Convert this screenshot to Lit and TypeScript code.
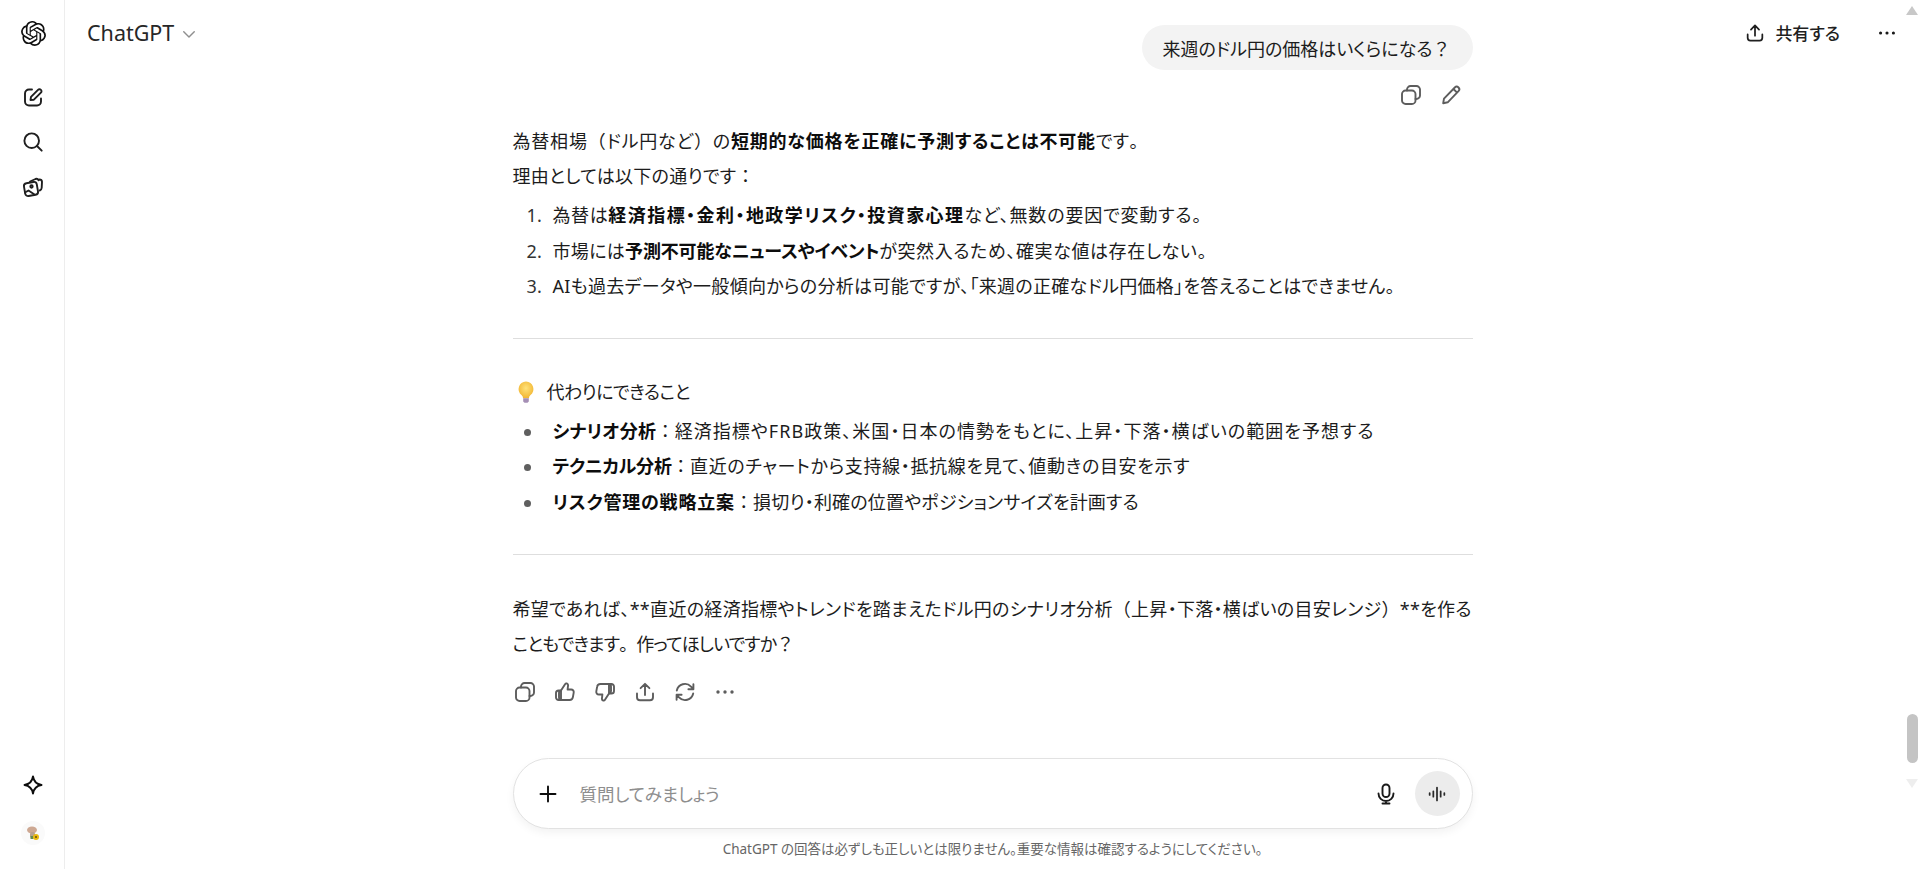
import { LitElement, html, css, svg } from "lit";
import { customElement } from "lit/decorators.js";

const ic = (body: unknown, size = 24, cls = "") => html`<svg class=${cls} width=${size} height=${size} viewBox="0 0 24 24" fill="none" stroke="currentColor" stroke-width="1.9" stroke-linecap="round" stroke-linejoin="round">${body}</svg>`;

/* Full-width punctuation keeps its full em box; everything else is set proportionally. */
const t = (s: string) => s.split(/([（）：？。])/).map((p) => (/^[（）：？。]$/.test(p) ? html`<span class="fw">${p}</span>` : p));

const copy = svg`<rect x="3" y="7.5" width="13.5" height="13.5" rx="3.6"/><path d="M8 7.5V6.6A3.6 3.6 0 0 1 11.6 3h5.8A3.6 3.6 0 0 1 21 6.6v5.8a3.6 3.6 0 0 1-3.6 3.6h-.9"/>`;
const share = svg`<path d="M12 15V4M7.6 8.2 12 3.8l4.4 4.4M4 13.5v3.7A3 3 0 0 0 7 20.2h10a3 3 0 0 0 3-3v-3.7"/>`;
const pencil = svg`<path d="M4.2 20.2 5 15.6 15.8 4.5a2.6 2.6 0 0 1 3.7 3.7L8.7 19.3zM14.4 6l3.7 3.7"/>`;
const thumbUp = svg`<path d="M8 10.5 12.2 4c.6-1 2.7-.8 2.9 1.2l-.5 4.3h3.6a2.6 2.6 0 0 1 2.5 3.1l-.8 4.5a3.4 3.4 0 0 1-3.4 2.9H8z"/><path d="M8 10.5H5.6A2.6 2.6 0 0 0 3 13.100v4.300A2.6 2.6 0 0 0 5.600 20H8a2.600 2.600 0 0 1-2-2.600v-4.300a2.600 2.600 0 0 1 2-2.600z"/>`;
const thumbDown = svg`<path d="M16 13.500 11.800 20c-.6 1-2.700.8-2.900-1.200l.5-4.300H5.800a2.600 2.600 0 0 1-2.500-3.100l.8-4.500A3.400 3.400 0 0 1 7.500 4H16z"/><path d="M16 13.500h2.400a2.600 2.600 0 0 0 2.600-2.600V6.600A2.600 2.600 0 0 0 18.400 4H16a2.600 2.600 0 0 1 2 2.600v4.300a2.600 2.600 0 0 1-2 2.600z"/>`;
const regen = svg`<path d="M3.800 10.500A8.300 8.300 0 0 1 18 6.600l2.400 2.600M20.400 4.200v5h-5M20.200 13.500A8.300 8.300 0 0 1 6 17.400l-2.400-2.600M3.600 19.800v-5h5"/>`;
const dots = svg`<circle cx="5" cy="12" r="1.700" fill="currentColor" stroke="none"/><circle cx="12" cy="12" r="1.700" fill="currentColor" stroke="none"/><circle cx="19" cy="12" r="1.700" fill="currentColor" stroke="none"/>`;
const logo = "M22.2819 9.8211a5.9847 5.9847 0 0 0-.5157-4.9108 6.0462 6.0462 0 0 0-6.5098-2.9A6.0651 6.0651 0 0 0 4.9807 4.1818a5.9847 5.9847 0 0 0-3.9977 2.9 6.0462 6.0462 0 0 0 .7427 7.0966 5.98 5.98 0 0 0 .511 4.9107 6.051 6.051 0 0 0 6.5146 2.9001A5.9847 5.9847 0 0 0 13.2599 24a6.0557 6.0557 0 0 0 5.7718-4.2058 5.9894 5.9894 0 0 0 3.9977-2.9001 6.0557 6.0557 0 0 0-.7475-7.0729zm-9.022 12.6081a4.4755 4.4755 0 0 1-2.8764-1.0408l.1419-.0804 4.7783-2.7582a.7948.7948 0 0 0 .3927-.6813v-6.7369l2.02 1.1686a.071.071 0 0 1 .038.052v5.5826a4.504 4.504 0 0 1-4.4945 4.4944zm-9.6607-4.1254a4.4708 4.4708 0 0 1-.5346-3.0137l.142.0852 4.783 2.7582a.7712.7712 0 0 0 .7806 0l5.8428-3.3685v2.3324a.0804.0804 0 0 1-.0332.0615L9.74 19.9502a4.4992 4.4992 0 0 1-6.1408-1.6464zM2.3408 7.8956a4.485 4.485 0 0 1 2.3655-1.9728V11.6a.7664.7664 0 0 0 .3879.6765l5.8144 3.3543-2.0201 1.1685a.0757.0757 0 0 1-.071 0l-4.8303-2.7865A4.504 4.504 0 0 1 2.3408 7.872zm16.5963 3.8558L13.1038 8.364 15.1192 7.2a.0757.0757 0 0 1 .071 0l4.8303 2.7913a4.4944 4.4944 0 0 1-.6765 8.1042v-5.6772a.79.79 0 0 0-.407-.667zm2.0107-3.0231l-.142-.0852-4.7735-2.7818a.7759.7759 0 0 0-.7854 0L9.409 9.2297V6.8974a.0662.0662 0 0 1 .0284-.0615l4.8303-2.7866a4.4992 4.4992 0 0 1 6.6802 4.66zM8.3065 12.863l-2.02-1.1638a.0804.0804 0 0 1-.038-.0567V6.0742a4.4992 4.4992 0 0 1 7.3757-3.4537l-.142.0805L8.704 5.459a.7948.7948 0 0 0-.3927.6813zm1.0976-2.3654l2.602-1.4998 2.6069 1.4998v2.9994l-2.5974 1.4997-2.6067-1.4997Z";

@customElement("app-root")
export class AppRoot extends LitElement {
  static styles = css`
    :host { display: flex; height: 869px; overflow: hidden; background: #fff; color: #0d0d0d; position: relative;
      font-family: "Noto Sans", "Noto Sans CJK JP", sans-serif; font-size: 18px; font-feature-settings: "palt"; }
    svg { display: block; flex: none; }
    .fw { font-feature-settings: normal; }
    .ls-n09 { letter-spacing: -0.900px; }
    .ls-n02 { letter-spacing: -0.200px; }
    .ls-n015 { letter-spacing: -0.150px; }
    .ls-02 { letter-spacing: 0.200px; }
    .ls-06 { letter-spacing: 0.600px; }
    .ls-065 { letter-spacing: 0.650px; }
    .ls-08 { letter-spacing: 0.800px; }
    .ls-085 { letter-spacing: 0.850px; }
    .ls-10 { letter-spacing: 1.050px; }
    .ls-14 { letter-spacing: 1.450px; }
    .rail { width: 62px; flex: none; border-right: 1px solid #ededed; display: flex; flex-direction: column; align-items: center; padding: 21px 0 24px 2px; height: 824px; }
    .rail .logo { margin-bottom: 39px; }
    .rail .nav { display: flex; flex-direction: column; gap: 21px; color: #1f1f1f; margin-bottom: auto; }
    .rail .avatar { margin: 24px 0 0; }
    .main { flex: 1; min-width: 0; display: flex; flex-direction: column; position: relative; }
    .head { position: absolute; top: 0; left: 0; right: 0; display: flex; align-items: center; height: 65px; padding: 0 22px 0 22px; }
    .title { font-size: 21.500px; color: #272727; }
    .chev { color: #8f8f8f; margin: 2px 0 0 6px; }
    .spacer { flex: 1; }
    .share { display: flex; align-items: center; gap: 9px; font-size: 17px; font-weight: 500; color: #1f1f1f; }
    .more { margin-left: 36px; color: #1a1a1a; }
    .col { width: 960px; margin: 0 auto; display: flex; flex-direction: column; flex: 1; }
    .bubble-row { display: flex; justify-content: flex-end; padding-top: 25px; }
    .bubble { height: 45px; box-sizing: border-box; background: #f3f3f3; border-radius: 23px; padding: 0 21px; display: flex; align-items: center; width: 331px; white-space: nowrap; color: #1c1c1c; }
    .user-actions { display: flex; justify-content: flex-end; gap: 16px; padding: 13px 10px 0 0; color: #5d5d5d; height: 24px; }
    .msg { margin-top: 17px; line-height: 35px; color: #1c1c1c; letter-spacing: 0.300px; }
    p { margin: 0; }
    b { font-weight: 700; color: #0d0d0d; }
    ol, ul { margin: 4px 0 0; padding: 0; list-style: none; }
    li { display: flex; height: 35.500px; align-items: center; padding-left: 40px; position: relative; white-space: nowrap; }
    .n { position: absolute; left: 14px; color: #333; }
    .dot { position: absolute; left: 11px; top: 15px; width: 7px; height: 7px; border-radius: 50%; background: #5f5f5f; }
    hr { border: 0; border-top: 1px solid #dedede; margin: 34px 0 37px; }
    hr.first { margin: 33px 0 36px; }
    .bulbline { display: flex; align-items: center; gap: 11px; padding-left: 3px; height: 35px; letter-spacing: -0.500px; }
    .actions { display: flex; gap: 16px; margin-top: 18px; color: #5d5d5d; }
    .composer { height: 71px; box-sizing: border-box; margin-top: auto; border: 1px solid #e2e2e2; border-radius: 36px; box-shadow: 0 4px 8px rgba(0,0,0,.05); display: flex; align-items: center; padding: 0 12px 0 22px; background: #fff; }
    .ph { color: #8e8e8e; margin-left: 20px; flex: 1; font-size: 17.500px; }
    .mic { color: #1a1a1a; margin-right: 17px; }
    .voice { width: 45px; height: 45px; border-radius: 50%; background: #ececec; display: flex; align-items: center; justify-content: center; color: #2a2a2a; }
    .note { text-align: center; font-size: 13.500px; color: #666; height: 40px; line-height: 41px; }
    .sb { position: absolute; right: 0; top: 0; bottom: 0; width: 17px; }
    .thumb { position: absolute; right: 2px; top: 714px; width: 11px; height: 49px; border-radius: 6px; background: #c4c4c4; }
    .up, .down { position: absolute; right: 2px; width: 0; height: 0; border-left: 6px solid transparent; border-right: 6px solid transparent; }
    .up { top: 6px; border-bottom: 9px solid #c8c8c8; }
    .down { top: 779px; border-top: 9px solid #eeeeee; }
  `;

  render() {
    return html`
      <aside class="rail">
        <svg class="logo" width="25" height="25" viewBox="0 0 24 24" fill="#111"><path d=${logo}/></svg>
        <div class="nav">
          ${ic(svg`<path d="M11 4.500H8A4 4 0 0 0 4 8.500v8A4 4 0 0 0 8 20.500h8a4 4 0 0 0 4-4v-3"/><path d="M9.500 15l.5-3.200L17 4.800a2 2 0 0 1 2.900 2.900l-7 7z"/>`, 24)}
          ${ic(svg`<circle cx="10.700" cy="10.700" r="7.300"/><path d="m16 16 4.700 4.700"/>`, 24)}
          ${ic(svg`<path d="M9 6.500 14.500 4a2.500 2.500 0 0 1 3.100 1.200M18.500 4.500A2.500 2.500 0 0 1 21 6.800l-.3 6a3 3 0 0 1-2 2.700"/><rect x="3.500" y="7.500" width="13" height="13" rx="3" transform="rotate(-10 10 14)"/><circle cx="10.500" cy="11.500" r="1.200"/><path d="m4 17.500 3.500-2 6 4"/>`, 24)}
        </div>
        ${ic(svg`<path d="M12 3.500c.8 5 3.200 7.700 8.500 8.500-5.300.8-7.700 3.500-8.500 8.500-.8-5-3.200-7.700-8.500-8.500 5.300-.8 7.700-3.500 8.500-8.500z"/>`, 24)}
        <svg class="avatar" width="24" height="24" viewBox="0 0 24 24">
          <circle cx="12" cy="12" r="12" fill="#fafafa"/>
          <ellipse cx="11" cy="9" rx="5" ry="3.500" fill="#cda893"/>
          <rect x="9" y="11" width="5" height="6" rx="2" fill="#b7a08f"/>
          <rect x="9.500" y="15" width="3" height="3" fill="#5f8a55"/>
          <circle cx="15" cy="16" r="3" fill="#e8b90f"/>
          <circle cx="15" cy="16" r="1" fill="#6b4a12"/>
        </svg>
      </aside>
      <main class="main">
        <header class="head">
          <span class="title">ChatGPT</span>
          ${ic(svg`<path d="m5 9 7 7 7-7"/>`, 18, "chev")}
          <span class="spacer"></span>
          <span class="share">${ic(share, 22)}共有する</span>
          <span class="more">${ic(dots, 22)}</span>
        </header>
        <section class="col">
          <div class="bubble-row"><div class="bubble">${t("来週のドル円の価格はいくらになる？")}</div></div>
          <div class="user-actions">${ic(copy, 24)}${ic(pencil, 24)}</div>
          <article class="msg">
            <p><span class="ls-08">${t("為替相場（ドル円など）の")}</span><b class="ls-08">短期的な価格を正確に予測することは不可能</b>${t("です。")}</p>
            <p>${t("理由としては以下の通りです：")}</p>
            <ol>
              <li><span class="n">1.</span><span><span class="ls-06">為替は</span><b class="ls-14">経済指標・金利・地政学リスク・投資家心理</b><span class="ls-085">など、無数の要因で変動する。</span></span></li>
              <li><span class="n">2.</span><span>市場には<b class="ls-n015">予測不可能なニュースやイベント</b><span class="ls-06">が突然入るため、確実な値は存在しない。</span></span></li>
              <li><span class="n">3.</span><span>AIも過去データや一般傾向からの分析は可能ですが、「来週の正確なドル円価格」を答えることはできません。</span></li>
            </ol>
            <hr class="first" />
            <div class="bulbline">
              <svg width="20" height="24" viewBox="0 0 20 24">
                <defs><radialGradient id="bulb" cx="50%" cy="40%" r="60%"><stop offset="0" stop-color="#ffe27a"/><stop offset="1" stop-color="#f2b632"/></radialGradient></defs>
                <path d="M10 1.500a7.600 7.600 0 0 0-4.300 13.700c.9.800 1.300 1.800 1.300 3h6c0-1.200.4-2.200 1.300-3A7.600 7.600 0 0 0 10 1.500z" fill="url(#bulb)"/>
                <path d="M7.200 18.200h5.600v3.300l-1.300 1.300h-3l-1.300-1.300z" fill="#a58fb5"/>
              </svg>
              <span>代わりにできること</span>
            </div>
            <ul>
              <li><i class="dot"></i><span><b>シナリオ分析</b>${t("：")}<span class="ls-10">経済指標やFRB政策、米国・日本の情勢をもとに、上昇・下落・横ばいの範囲を予想する</span></span></li>
              <li><i class="dot"></i><span><b class="ls-n02">テクニカル分析</b>${t("：")}<span class="ls-065">直近のチャートから支持線・抵抗線を見て、値動きの目安を示す</span></span></li>
              <li><i class="dot"></i><span><b class="ls-08">リスク管理の戦略立案</b>${t("：")}<span class="ls-02">損切り・利確の位置やポジションサイズを計画する</span></span></li>
            </ul>
            <hr />
            <p>${t("希望であれば、**直近の経済指標やトレンドを踏まえたドル円のシナリオ分析（上昇・下落・横ばいの目安レンジ）**を作る")}<br /><span class="ls-n09">${t("こともできます。作ってほしいですか？")}</span></p>
          </article>
          <div class="actions">
            ${ic(copy, 24)}${ic(thumbUp, 24)}${ic(thumbDown, 24)}${ic(share, 24)}${ic(regen, 24)}${ic(dots, 24)}
          </div>
          <div class="composer">
            ${ic(svg`<path d="M12 4.500v15M4.500 12h15"/>`, 24)}
            <span class="ph">質問してみましょう</span>
            <span class="mic">${ic(svg`<rect x="8.500" y="2.500" width="7" height="12.500" rx="3.500"/><path d="M4.500 11.500a7.500 7.500 0 0 0 15 0M12 19v2.500M8.500 21.500h7"/>`, 24)}</span>
            <span class="voice">${ic(svg`<path d="M12 5v14M16 9v6M8 9v6M4 11v2M20 11v2"/>`, 22)}</span>
          </div>
          <div class="note">ChatGPT の回答は必ずしも正しいとは限りません。重要な情報は確認するようにしてください。</div>
        </section>
        <div class="sb"><i class="up"></i><i class="thumb"></i><i class="down"></i></div>
      </main>
    `;
  }
}
